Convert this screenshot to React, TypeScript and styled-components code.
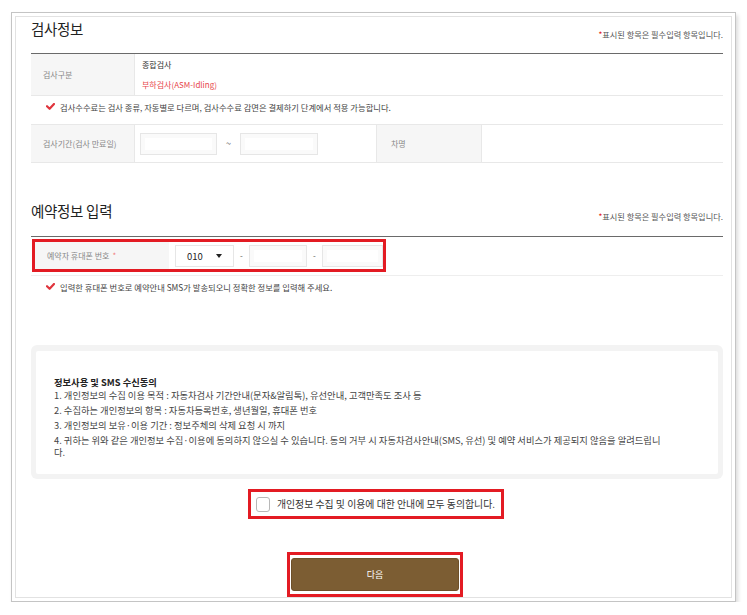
import React from 'react';
import styled, { createGlobalStyle } from 'styled-components';

const RED = '#e31b23';

const GlobalStyle = createGlobalStyle`
  html, body {
    margin: 0;
    padding: 0;
    background: #fff;
  }
  body {
    font-family: 'Noto Sans CJK KR', 'Noto Sans', sans-serif;
    color: #333;
  }
`;

const Page = styled.div`
  padding: 12px 0 0 11px;
`;

const Frame = styled.div`
  box-sizing: border-box;
  width: 725px;
  padding: 3px;
  border: 1px solid #c4c4c4;
  box-shadow: 2px 3px 4px rgba(0, 0, 0, 0.14);
  background: #fff;
`;

const Inner = styled.div`
  border: 1px solid #e2e2e2;
  padding: 0 8px 0 15px;
`;

const SectionHead = styled.div<{ $top?: number; $height: number }>`
  display: flex;
  justify-content: space-between;
  align-items: flex-start;
  height: ${(p) => p.$height}px;
  margin-top: ${(p) => p.$top || 0}px;
`;

const Title = styled.h2`
  margin: 0;
  font-size: 14.5px;
  line-height: 24px;
  font-weight: 400;
  color: #222;
  letter-spacing: -0.3px;
`;

const Required = styled.p`
  margin: 11px 0 0;
  font-size: 8.2px;
  line-height: 12px;
  color: #555;
  span {
    color: ${RED};
  }
`;

const Table = styled.div`
  border-top: 1px solid #6a6a6a;
`;

const Row = styled.div<{ $cols: string; $height: number }>`
  display: grid;
  grid-template-columns: ${(p) => p.$cols};
  height: ${(p) => p.$height}px;
  border-bottom: 1px solid #e8e8e8;
`;

const LabelCell = styled.div<{ $line?: boolean }>`
  display: flex;
  align-items: center;
  padding-left: ${(p) => (p.$line ? 14 : 12)}px;
  background: #f6f6f6;
  border-left: ${(p) => (p.$line ? '1px solid #e8e8e8' : 'none')};
  font-size: 8px;
  color: #888;
  span {
    color: #f07a7e;
    margin-left: 3px;
  }
`;

const ValueCell = styled.div`
  display: flex;
  flex-direction: column;
  justify-content: center;
  gap: 8px;
  padding-left: 7px;
  border-left: 1px solid #e8e8e8;
  font-size: 8px;
  line-height: 12px;
  color: #333;
`;

const RangeCell = styled.div`
  display: flex;
  align-items: center;
  padding-left: 5px;
  border-left: 1px solid #e8e8e8;
`;

const Sub = styled.span`
  color: #e8474c;
`;

const Field = styled.div<{ $w: number }>`
  box-sizing: border-box;
  width: ${(p) => p.$w}px;
  height: 22px;
  border: 1px solid #e6e6e6;
  box-shadow: inset 0 0 0 4px #fafafa;
  background: #fff;
`;

const Tilde = styled.span`
  width: 23px;
  text-align: center;
  font-size: 9px;
  color: #555;
`;

const Notice = styled.div<{ $height: number; $top: number; $line?: boolean }>`
  display: flex;
  align-items: flex-start;
  gap: 5px;
  box-sizing: border-box;
  height: ${(p) => p.$height}px;
  padding: ${(p) => p.$top}px 0 0 15px;
  border-bottom: ${(p) => (p.$line ? '1px solid #e8e8e8' : 'none')};
  font-size: 8.3px;
  line-height: 12px;
  color: #444;
  svg {
    flex: none;
    margin-top: 2px;
  }
`;

const PhoneRow = styled.div`
  display: flex;
  align-items: flex-start;
  height: 38px;
  border-bottom: 1px solid #eeeeee;
`;

const Highlight = styled.div`
  display: flex;
  align-items: stretch;
  margin: 2px 0 0 1px;
  border: 3px solid ${RED};
  height: 27px;
`;

const PhoneLabel = styled(LabelCell)`
  width: 122px;
`;

const PhoneInputs = styled.div`
  display: flex;
  align-items: center;
  padding-left: 6px;
`;

const Select = styled.div`
  box-sizing: border-box;
  display: flex;
  align-items: center;
  justify-content: space-between;
  width: 59px;
  height: 22px;
  padding: 0 11px;
  border: 1px solid #e6e6e6;
  font-size: 9.5px;
  color: #222;
`;

const Caret = styled.span`
  width: 0;
  height: 0;
  border-left: 3.5px solid transparent;
  border-right: 3.5px solid transparent;
  border-top: 4px solid #222;
`;

const Dash = styled.span`
  width: 15px;
  text-align: center;
  font-size: 8px;
  color: #555;
`;

const AgreeBox = styled.div`
  margin-top: 48px;
  padding: 6px 5px 5px;
  background: #f3f3f3;
  border-radius: 6px;
`;

const AgreeInner = styled.div`
  background: #fff;
  border-radius: 2px;
  padding: 25px 52px 16px 18px;
  font-size: 9.3px;
  line-height: 12px;
  color: #444;
  strong {
    display: block;
    margin-bottom: 1px;
    color: #222;
    font-weight: 700;
  }
  p {
    margin: 0 0 3px;
    white-space: nowrap;
  }
  p.wrap {
    white-space: normal;
  }
  p:last-child {
    margin-bottom: 0;
  }
`;

const Center = styled.div<{ $top: number }>`
  display: flex;
  justify-content: center;
  margin-top: ${(p) => p.$top}px;
`;

const CheckLine = styled.label`
  box-sizing: border-box;
  display: flex;
  align-items: center;
  gap: 7px;
  height: 30px;
  padding: 0 6px 0 5px;
  border: 3px solid ${RED};
  font-size: 9.9px;
  color: #333;
  margin-left: -2px;
`;

const Box = styled.span`
  box-sizing: border-box;
  width: 14px;
  height: 15px;
  border: 1px solid #b8b8b8;
  border-radius: 3px;
  background: #fff;
`;

const ButtonFrame = styled.div`
  box-sizing: border-box;
  height: 45px;
  padding: 3px 1px;
  border: 3px solid ${RED};
  margin-left: -4px;
`;

const NextButton = styled.button`
  width: 168px;
  height: 33px;
  border: 1px solid #6e5029;
  border-radius: 3px;
  background: #7c5d33;
  color: #fff;
  font-family: inherit;
  font-size: 9px;
  cursor: pointer;
`;

const Check = () => (
  <svg width="9" height="7" viewBox="0 0 9 7">
    <path d="M1 3.2 L3.6 5.8 L8 1" fill="none" stroke="#e0353d" strokeWidth="2.2" strokeLinecap="round" strokeLinejoin="round" />
  </svg>
);

const agreeLines = [
  '1. 개인정보의 수집 이용 목적 : 자동차검사 기간안내(문자&알림톡), 유선안내, 고객만족도 조사 등',
  '2. 수집하는 개인정보의 항목 : 자동차등록번호, 생년월일, 휴대폰 번호',
  '3. 개인정보의 보유·이용 기간 : 정보주체의 삭제 요청 시 까지',
  '4. 귀하는 위와 같은 개인정보 수집·이용에 동의하지 않으실 수 있습니다. 동의 거부 시 자동차검사안내(SMS, 유선) 및 예약 서비스가 제공되지 않음을 알려드립니다.',
];

const App = () => {
  return (
    <Page>
      <GlobalStyle />
      <Frame>
        <Inner>
          <SectionHead $height={36}>
            <Title>검사정보</Title>
            <Required>
              <span>*</span>표시된 항목은 필수입력 항목입니다.
            </Required>
          </SectionHead>
          <Table>
            <Row $cols="103px 1fr" $height={41}>
              <LabelCell>검사구분</LabelCell>
              <ValueCell>
                <span>종합검사</span>
                <Sub>부하검사(ASM-Idling)</Sub>
              </ValueCell>
            </Row>
            <Notice $height={29} $top={5} $line>
              <Check />
              검사수수료는 검사 종류, 자동별로 다르며, 검사수수료 감면은 결제하기 단계에서 적용 가능합니다.
            </Notice>
            <Row $cols="103px 242px 105px 1fr" $height={37}>
              <LabelCell>검사기간(검사 만료일)</LabelCell>
              <RangeCell>
                <Field $w={77} />
                <Tilde>~</Tilde>
                <Field $w={78} />
              </RangeCell>
              <LabelCell $line>차명</LabelCell>
              <ValueCell />
            </Row>
          </Table>

          <SectionHead $top={36} $height={37}>
            <Title>예약정보 입력</Title>
            <Required>
              <span>*</span>표시된 항목은 필수입력 항목입니다.
            </Required>
          </SectionHead>
          <Table>
            <PhoneRow>
              <Highlight>
                <PhoneLabel>
                  예약자 휴대폰 번호<span>*</span>
                </PhoneLabel>
                <PhoneInputs>
                  <Select>
                    010
                    <Caret />
                  </Select>
                  <Dash>-</Dash>
                  <Field $w={58} />
                  <Dash>-</Dash>
                  <Field $w={61} />
                </PhoneInputs>
              </Highlight>
            </PhoneRow>
            <Notice $height={21} $top={5}>
              <Check />
              입력한 휴대폰 번호로 예약안내 SMS가 발송되오니 정확한 정보를 입력해 주세요.
            </Notice>
          </Table>

          <AgreeBox>
            <AgreeInner>
              <strong>정보사용 및 SMS 수신동의</strong>
              {agreeLines.map((line, i) => (
                <p key={line} className={i === agreeLines.length - 1 ? 'wrap' : undefined}>
                  {line}
                </p>
              ))}
            </AgreeInner>
          </AgreeBox>

          <Center $top={10}>
            <CheckLine>
              <Box />
              개인정보 수집 및 이용에 대한 안내에 모두 동의합니다.
            </CheckLine>
          </Center>

          <Center $top={33}>
            <ButtonFrame>
              <NextButton>다음</NextButton>
            </ButtonFrame>
          </Center>
        </Inner>
      </Frame>
    </Page>
  );
};

export default App;
